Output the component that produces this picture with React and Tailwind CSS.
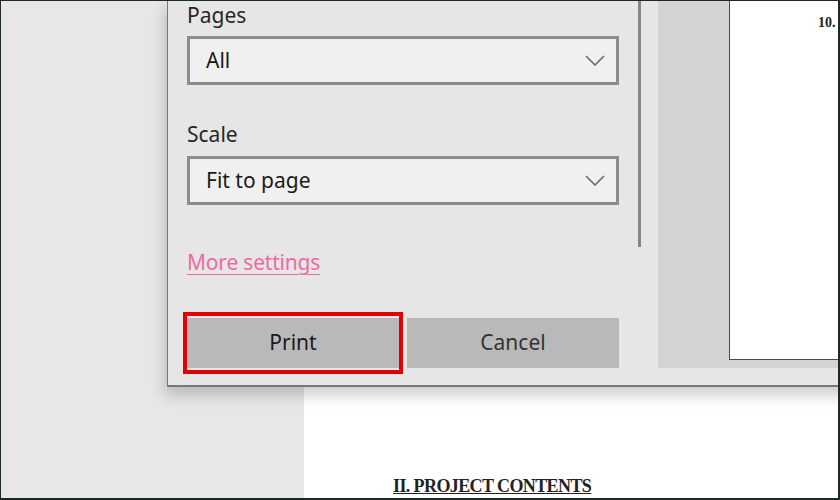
const Chevron = () => (
  <svg width="20" height="11" viewBox="0 0 20 11" fill="none">
    <path d="M1 1 L10 10 L19 1" stroke="#6b6b6b" strokeWidth="1.6" />
  </svg>
);

const Select = ({ value }) => (
  <div className="flex items-center justify-between h-[49px] border-[3px] border-[#8c8c8c] bg-[#f0f0f0] pl-[16px] pr-[11px]">
    <span className="text-[21px] text-[#1a1a1a]">{value}</span>
    <Chevron />
  </div>
);

export default function App() {
  return (
    <div
      className="relative w-[840px] h-[500px] overflow-hidden border-t border-l border-r-2 border-b-2 border-[#1b2a26] bg-[#e8e8e8]"
      style={{ fontFamily: '"Noto Sans", "Open Sans", sans-serif' }}
    >
      {/* document behind the dialog */}
      <div className="flex h-full">
        <div className="w-[303px] shrink-0 bg-[#e7e7e7]" />
        <div className="flex-1 bg-white flex flex-col justify-end pb-[1px]">
          <div
            className="ml-[89px] text-[18px] font-bold underline tracking-[-0.6px] text-[#222] leading-[22px]"
            style={{ fontFamily: '"Liberation Serif", "Times New Roman", serif' }}
          >
            II. PROJECT CONTENTS
          </div>
        </div>
      </div>

      {/* print dialog */}
      <div className="absolute left-[166px] top-0 w-[700px] h-[386px] flex bg-[#e6e6e6] border-l border-b-2 border-[#777] shadow-[-2px_8px_14px_rgba(0,0,0,0.2)]">
        {/* settings pane */}
        <div className="w-[489px] shrink-0 flex flex-col pl-[19px]">
          <div className="flex">
            <div className="w-[432px] flex flex-col">
              <div className="text-[21px] leading-[28px] text-[#262626]">Pages</div>
              <div className="mt-[7px]">
                <Select value="All" />
              </div>
              <div className="mt-[35px] text-[21px] leading-[28px] text-[#262626]">Scale</div>
              <div className="mt-[8px]">
                <Select value="Fit to page" />
              </div>
              <div className="mt-[43px] text-[21px] leading-[28px] tracking-[-0.2px] text-[#ee6aa3] underline underline-offset-[4px] decoration-1">
                More settings
              </div>
            </div>
            <div className="ml-[19px] w-[3px] h-[246px] bg-[#868686]" />
          </div>
          <div className="mt-[42px] w-[432px] grid grid-cols-2 gap-2">
            <div className="relative h-[50px] bg-[#b9b9b9] flex items-center justify-center text-[21px] text-[#1a1a1a]">
              Print
              <div className="absolute -left-[4px] -right-[4px] -top-[6px] -bottom-[6px] border-[4px] border-[#e30000]" />
            </div>
            <div className="h-[50px] bg-[#b9b9b9] flex items-center justify-center text-[21px] text-[#333]">
              Cancel
            </div>
          </div>
        </div>

        {/* preview pane */}
        <div className="w-[200px] h-[367px] flex bg-[#d3d3d3] border-l border-[#ececec] pl-[71px] pb-[8px]">
          <div className="flex-1 bg-white border-l border-b border-[#4a4a4a] pl-[88px] pt-[8px]">
            <span
              className="text-[14px] font-bold text-[#222]"
              style={{ fontFamily: '"Liberation Serif", "Times New Roman", serif' }}
            >
              10.
            </span>
          </div>
        </div>
      </div>
    </div>
  );
}
